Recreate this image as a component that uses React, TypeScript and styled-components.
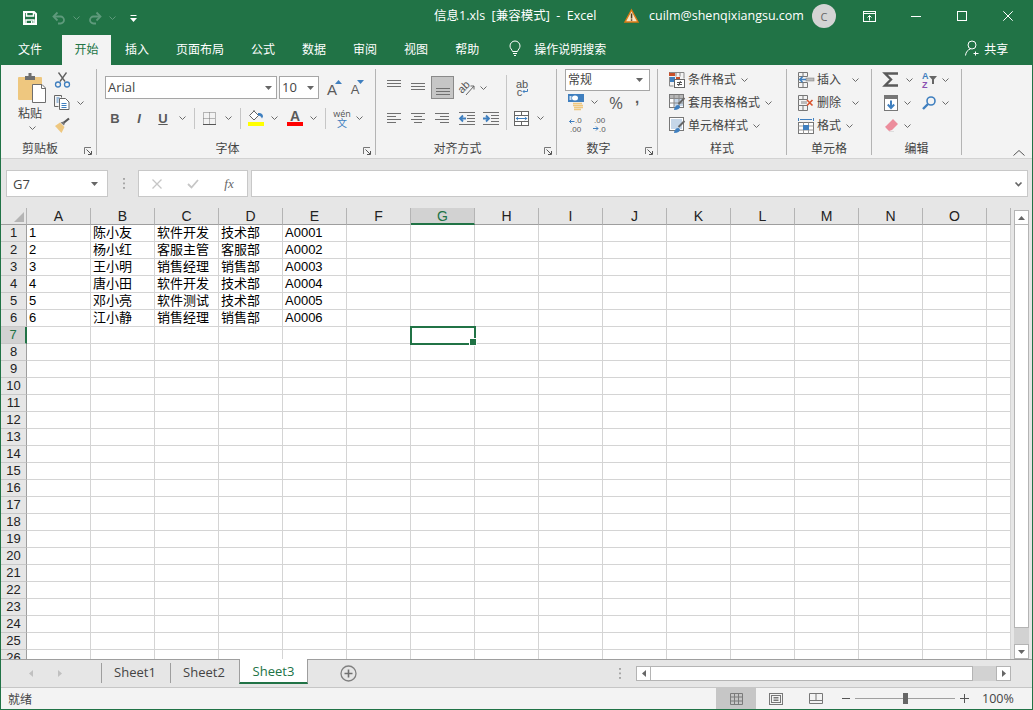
import React from "react";
import styled, { createGlobalStyle } from "styled-components";

const GREEN = "#217346";
const GRAY = "#6a6a6a";
const BLUE = "#3f7fbf";
const UI_FONT = `"Open Sans", "Noto Sans CJK SC", sans-serif`;
const CJK_FONT = `"Noto Sans CJK SC", "Open Sans", sans-serif`;
const SHEET_FONT = `"Liberation Sans", "Noto Sans CJK SC", sans-serif`;

const Global = createGlobalStyle`
  html, body { margin: 0; padding: 0; overflow: hidden; background: #fff; }
  * { box-sizing: border-box; }
  svg { display: block; flex: none; overflow: visible; }
`;

const Window = styled.div`
  width: 1033px; height: 710px; display: flex; flex-direction: column;
  border: 1px solid ${GREEN}; border-top: 0; background: #e6e6e6;
  font: 12px ${CJK_FONT}; color: #444; overflow: hidden;
`;
const TitleBar = styled.header`
  height: 35px; flex: none; background: ${GREEN}; color: #fff;
  display: flex; align-items: center; padding-bottom: 3px;
`;
const QuickAccess = styled.div`
  flex: none; display: flex; align-items: center; margin-top: 4px;
`;
const Slot = styled.span<{ $w: number; $l?: number; $h?: number }>`
  flex: none; display: flex; align-items: center; justify-content: center;
  width: ${(p) => p.$w}px; margin-left: ${(p) => p.$l ?? 0}px;
  ${(p) => (p.$h ? `height: ${p.$h}px;` : "")}
`;
const AlignSlot = styled.span<{ $l: number; $t: number }>`
  flex: none; width: 14px; height: 23px; margin-left: ${(p) => p.$l}px; padding-top: ${(p) => p.$t}px;
`;
const TitleText = styled.span<{ $l: number; $w: number }>`
  flex: none; margin-left: ${(p) => p.$l}px; width: ${(p) => p.$w}px;
  white-space: pre; font: 12.5px/16px ${UI_FONT};
`;
const Avatar = styled.span`
  flex: none; width: 24px; height: 24px; margin-left: 8px; border-radius: 50%;
  background: #d4d4d4; color: #666; display: flex; align-items: center; justify-content: center;
  font: 11px ${UI_FONT};
`;
const TabStrip = styled.nav`
  height: 30px; flex: none; background: ${GREEN}; display: flex; align-items: stretch; padding-left: 4px;
`;
const MenuTab = styled.span<{ $active?: boolean; $r?: number }>`
  flex: none; display: flex; align-items: center; justify-content: center;
  padding: 0 ${(p) => (p.$active ? 12.5 : 13)}px 4px;
  margin-right: ${(p) => p.$r ?? 1}px;
  background: ${(p) => (p.$active ? "#f3f3f3" : "transparent")};
  color: ${(p) => (p.$active ? GREEN : "#fff")};
  font: 12px ${CJK_FONT};
`;
const TabAid = styled.span<{ $l: number }>`
  flex: none; display: flex; align-items: center; margin-left: ${(p) => p.$l}px; color: #fff; font: 12px ${CJK_FONT}; padding-bottom: 4px;
`;
const Ribbon = styled.section`
  height: 94px; flex: none; background: #f3f3f3; border-bottom: 1px solid #d2d2d2;
  display: flex; align-items: flex-start; padding-top: 4px; position: relative;
`;
const Group = styled.div<{ $w: number }>`
  flex: none; width: ${(p) => p.$w}px; height: 86px; border-right: 1px solid #b4b4b4;
  display: flex; flex-direction: column;
`;
const GroupBody = styled.div<{ $row?: boolean }>`
  height: 72px; flex: none; display: flex; flex-direction: ${(p) => (p.$row ? "row" : "column")};
`;
const GroupFoot = styled.div<{ $launcher?: boolean }>`
  height: 14px; display: grid; grid-template-columns: ${(p) => (p.$launcher ? "1fr 17px" : "1fr")};
  align-items: center; text-align: center; font: 12px/14px ${CJK_FONT}; color: #444;
`;
const LauncherBox = styled.span`
  justify-self: start; margin-left: 5px; align-self: end;
`;
const ToolRow = styled.div<{ $h?: number; $top?: number }>`
  display: flex; align-items: center; height: ${(p) => p.$h ?? 23}px; margin-top: ${(p) => p.$top ?? 0}px; flex: none;
`;
const PasteColumn = styled.div`
  width: 53px; padding: 4px 0 0 17px; display: flex; flex-direction: column; flex: none;
`;
const PasteLabel = styled.span`
  font: 12px/16px ${CJK_FONT}; color: #444; width: 24px; margin-top: 2px; text-align: center;
`;
const PasteChevron = styled.span`
  margin: 5px 0 0 11px;
`;
const Stack = styled.div`
  display: flex; flex-direction: column; margin-top: -1px; flex: none;
`;
const Combo = styled.div<{ $w: number; $h?: number; $l?: number }>`
  flex: none; width: ${(p) => p.$w}px; height: ${(p) => p.$h ?? 23}px; margin-left: ${(p) => p.$l ?? 0}px;
  background: #fff; border: 1px solid #a6a6a6; display: flex; align-items: center; justify-content: space-between;
  padding: 0 4px 2px 2px; font: 13px ${UI_FONT}; color: #444;
  svg { margin-top: 2px; }
`;
const ComboCjk = styled(Combo)`
  font: 12px ${CJK_FONT}; padding-left: 2px; padding-right: 6px; padding-bottom: 3px;
`;
const BoldLetter = styled.span<{ $kind: "b" | "i" | "u" }>`
  font: ${(p) => (p.$kind === "i" ? "italic bold" : "bold")} 13px ${SHEET_FONT};
  color: #5a5a5a; ${(p) => (p.$kind === "u" ? "text-decoration: underline;" : "")}
`;
const SizeLetter = styled.span<{ $s: number }>`
  flex: none; font: ${(p) => p.$s}px/15px ${SHEET_FONT}; color: #5a5a5a; margin-top: 3px;
`;
const SizeCue = styled.span`
  flex: none; margin: -11px 0 0 -2px;
`;
const FontColorTool = styled.span`
  display: flex; flex-direction: column; align-items: center; width: 16px; font: bold 14px/12px ${SHEET_FONT}; color: #5a5a5a;
`;
const ColorBar = styled.span<{ $c: string }>`
  display: block; width: 16px; height: 4px; background: ${(p) => p.$c};
`;
const Divider = styled.span<{ $l: number; $h: number; $t?: number }>`
  flex: none; width: 1px; height: ${(p) => p.$h}px; margin-left: ${(p) => p.$l}px; margin-top: ${(p) => p.$t ?? 0}px; background: #c6c6c6;
`;
const PhoneticIcon = styled.span`
  display: flex; flex-direction: column; align-items: center; color: #555; font: 9px/9px ${UI_FONT};
`;
const PhoneticHan = styled.span`
  color: ${BLUE}; font: 10px/10px ${CJK_FONT};
`;
const WrapLetters = styled.span`
  display: flex; flex-direction: column; width: 13px; font: 11px/8px ${SHEET_FONT}; color: #555;
`;
const ColumnFlow = styled.div`
  display: flex; flex-direction: column; flex: none;
`;
const SelectedTool = styled.span<{ $l: number }>`
  flex: none; width: 23px; height: 23px; margin-left: ${(p) => p.$l}px; background: #c6c6c6; border: 1px solid #8a8a8a;
  display: flex; align-items: flex-end; justify-content: center; padding-bottom: 3px;
`;
const Percent = styled.span`
  font: 17px ${UI_FONT}; color: #5a5a5a;
`;
const Comma = styled.span`
  font: bold 15px/12px ${SHEET_FONT}; color: #5a5a5a; margin-top: -9px;
`;
const CmdText = styled.span<{ $l?: number }>`
  flex: none; margin-left: ${(p) => p.$l ?? 3}px; padding-bottom: 2px; font: 12px ${CJK_FONT}; color: #444;
`;
const Collapse = styled.span`
  margin: 81px 0 0 51px;
`;
const FormulaRow = styled.div`
  height: 49px; flex: none; padding: 11px 0 0 5px; display: flex; align-items: flex-start; background: #e6e6e6;
`;
const FieldBox = styled.div<{ $w: number; $l?: number }>`
  flex: none; width: ${(p) => p.$w}px; height: 27px; margin-left: ${(p) => p.$l ?? 0}px; background: #fff; border: 1px solid #c8c8c8;
  display: flex; align-items: center;
`;
const NameField = styled(FieldBox)`
  justify-content: space-between; padding: 0 9px 0 6px; font: 13px ${UI_FONT}; color: #444;
`;
const FxSlot = styled.span`
  flex: none; width: 36px; display: flex; justify-content: center;
  font: italic 13px "Liberation Serif", serif; color: #666;
`;
const FormulaInput = styled(FieldBox)`
  justify-content: flex-end; padding-right: 5px;
`;
const Dots = styled.span<{ $l: number; $t?: number }>`
  flex: none; width: 2px; height: 11px; margin-left: ${(p) => p.$l}px; margin-top: ${(p) => p.$t ?? 8}px;
  background-image: linear-gradient(#a6a6a6 0 2px, transparent 2px 4.5px); background-size: 2px 4.5px;
`;
const SheetArea = styled.div`
  height: 451px; flex: none; display: flex; background: #e6e6e6;
`;
const GridClip = styled.div`
  width: 1010px; flex: none; overflow: hidden; height: 451px;
`;
const SheetGrid = styled.div`
  display: grid; grid-template-columns: 26px repeat(15, 64px) 24px; grid-auto-rows: 17px;
  background: #fff; font: 13px/16px ${SHEET_FONT}; color: #000;
`;
const Corner = styled.div`
  background: #e6e6e6; border-right: 1px solid #b4b4b4; border-bottom: 1px solid #9e9e9e;
  display: flex; align-items: flex-end; justify-content: flex-end; padding: 0 2px 2px 0;
`;
const ColHead = styled.div<{ $on?: boolean }>`
  display: flex; align-items: center; justify-content: center; font: 14px/16px ${SHEET_FONT};
  background: ${(p) => (p.$on ? "#d2d2d2" : "#e6e6e6")}; color: ${(p) => (p.$on ? GREEN : "#222")};
  border-right: 1px solid #b4b4b4;
  border-bottom: ${(p) => (p.$on ? `2px solid ${GREEN}` : "1px solid #9e9e9e")};
`;
const RowHead = styled.div<{ $on?: boolean }>`
  display: flex; align-items: center; justify-content: center; font: 13px/16px ${SHEET_FONT};
  background: ${(p) => (p.$on ? "#d2d2d2" : "#e6e6e6")}; color: ${(p) => (p.$on ? GREEN : "#222")};
  border-right: ${(p) => (p.$on ? `2px solid ${GREEN}` : "1px solid #9e9e9e")};
  border-bottom: 1px solid #c8c8c8;
`;
const Cell = styled.div<{ $on?: boolean }>`
  border-right: 1px solid #d4d4d4; border-bottom: 1px solid #d4d4d4; padding: 0 0 0 2px; white-space: nowrap;
  position: relative;
  ${(p) =>
    p.$on
      ? `&::before { content: ""; position: absolute; inset: -1px -2px -2px -1px; border: 2px solid ${GREEN}; z-index: 2; }
         &::after { content: ""; position: absolute; right: -3px; bottom: -3px; width: 6px; height: 6px; background: ${GREEN}; border: 1px solid #fff; z-index: 3; }`
      : ""}
`;
const VScroll = styled.div`
  flex: none; width: 15px; margin: 2px 0 0 3px; display: flex; flex-direction: column; height: 449px;
`;
const ScrollButton = styled.div`
  flex: none; width: 15px; height: 15px; background: #fff; border: 1px solid #b4b4b4;
  display: flex; align-items: center; justify-content: center;
`;
const VThumb = styled.div`
  flex: none; height: 403px; background: #fff; border: 1px solid #b4b4b4; border-top: 0;
`;
const VTrack = styled.div`
  flex: 1; background: #d2d2d2;
`;
const SheetBar = styled.div`
  height: 29px; flex: none; display: flex; align-items: flex-start; background: #e6e6e6;
  border-top: 1px solid #9e9e9e; border-bottom: 1px solid #c6c6c6;
`;
const NavArrows = styled.div`
  width: 100px; flex: none; height: 26px; display: flex; align-items: center;
`;
const SheetTab = styled.div<{ $w: number }>`
  flex: none; width: ${(p) => p.$w}px; height: 20px; margin-top: 3px; padding: 0 2px 2px 0; display: flex; align-items: center; justify-content: center;
  border-left: 1px solid #9e9e9e; font: 13px ${UI_FONT}; color: #444;
`;
const ActiveSheetTab = styled.div<{ $w: number }>`
  flex: none; width: ${(p) => p.$w}px; height: 25px; margin-top: -1px; display: flex; align-items: center; justify-content: center;
  background: #fff; border: 1px solid #9e9e9e; border-top: 0; border-bottom: 2px solid ${GREEN}; font: 13px ${UI_FONT}; color: ${GREEN};
`;
const AddSheet = styled.span`
  flex: none; margin: 5px 0 0 32px;
`;
const HScroll = styled.div`
  flex: none; margin: 6px 0 0 15px; width: 375px; height: 15px; display: flex; background: #d2d2d2;
`;
const HThumb = styled.div`
  flex: none; width: 322px; background: #fff; border: 1px solid #b4b4b4; border-left: 0;
`;
const HSpacer = styled.div`
  flex: 1;
`;
const StatusBar = styled.footer`
  height: 21px; flex: none; background: #f3f3f3; display: flex; align-items: center;
`;
const StatusText = styled.span`
  flex: none; width: 715px; padding-left: 7px; font: 12px ${CJK_FONT}; color: #444;
`;
const ViewButton = styled.span<{ $on?: boolean }>`
  flex: none; width: 40px; height: 21px; display: flex; align-items: center; justify-content: center;
  background: ${(p) => (p.$on ? "#c6c6c6" : "transparent")};
`;
const SliderTrack = styled.span`
  flex: none; width: 100px; height: 1px; margin-left: 5px; background: #a0a0a0; display: flex; align-items: center; justify-content: center;
`;
const SliderThumb = styled.span`
  flex: none; width: 5px; height: 11px; background: #666; margin-left: 1px;
`;
const Zoom = styled.span`
  flex: none; margin-left: 13px; font: 12.5px ${UI_FONT}; color: #444;
`;

const Svg = ({ w, h, children }: { w: number; h: number; children: React.ReactNode }) => (
  <svg width={w} height={h} viewBox={`0 0 ${w} ${h}`} fill="none">{children}</svg>
);
const Chev = ({ c = GRAY, sw = 1 }: { c?: string; sw?: number }) => (
  <Svg w={7} h={4}><path d="M.5.5l3 3 3-3" stroke={c} strokeWidth={sw} /></Svg>
);
const Caret = () => (
  <Svg w={7} h={4}><path d="M0 0h7L3.5 4z" fill="#666" /></Svg>
);
const Launcher = () => (
  <LauncherBox>
    <Svg w={8} h={8}>
      <path d="M.5 7V.5H7" stroke="#777" />
      <path d="M2.5 2.5L7 7M7.5 4v3.5H4" stroke="#555" />
    </Svg>
  </LauncherBox>
);
const SaveIcon = () => (
  <Svg w={14} h={14}>
    <path d="M1 1h10l2 2v10H1z" stroke="#fff" strokeWidth="2" />
    <path d="M3.5 1v4h7V1" stroke="#fff" strokeWidth="1.5" />
    <path d="M3 13V9h8v4" stroke="#fff" strokeWidth="1.5" />
    <rect x="8" y="10" width="1.5" height="3" fill="#fff" />
  </Svg>
);
const UndoIcon = ({ flip }: { flip?: boolean }) => (
  <svg width={14} height={14} viewBox="0 0 14 14" fill="none" style={flip ? { transform: "scaleX(-1)" } : undefined}>
    <path d="M2 5.5h6.5a3.5 3.5 0 010 7H6" stroke="#5f9a7c" strokeWidth="1.8" />
    <path d="M5.5 1.5L1.5 5.5l4 4" stroke="#5f9a7c" strokeWidth="1.8" />
  </svg>
);
const QatMenu = () => (
  <Svg w={7} h={7}>
    <rect width="6" height="1" x=".5" fill="#fff" />
    <path d="M0 3h7L3.500 7z" fill="#fff" />
  </Svg>
);
const WarnIcon = () => (
  <Svg w={15} h={14}>
    <path d="M7.500 1L14 13H1z" fill="#f8e5c5" stroke="#dc7a14" strokeWidth="1.400" />
    <rect x="6.800" y="4.500" width="1.500" height="5" fill="#4a3a20" />
    <rect x="6.800" y="10.300" width="1.500" height="1.500" fill="#4a3a20" />
  </Svg>
);
const DisplayIcon = () => (
  <Svg w={13} h={11}>
    <rect x=".5" y=".5" width="12" height="10" stroke="#fff" />
    <path d="M.5 2.500h12" stroke="#fff" />
    <path d="M6.500 9.500V4.500M4.500 6.500l2-2 2 2" stroke="#fff" />
  </Svg>
);
const MinIcon = () => <Svg w={10} h={1}><rect width="10" height="1" fill="#fff" /></Svg>;
const MaxIcon = () => <Svg w={10} h={10}><rect x=".5" y=".5" width="9" height="9" stroke="#fff" /></Svg>;
const CloseIcon = () => <Svg w={10} h={10}><path d="M.3.3l9.400 9.400M9.700.3L.3 9.700" stroke="#fff" /></Svg>;
const BulbIcon = () => (
  <Svg w={12} h={17}>
    <path d="M3.500 11.500C3 9.500 1 8.500 1 6a5 5 0 0110 0c0 2.500-2 3.500-2.500 5.500z" stroke="#fff" />
    <path d="M4 13.500h4M5 15.500h2" stroke="#fff" />
  </Svg>
);
const ShareIcon = () => (
  <Svg w={15} h={16}>
    <circle cx="7" cy="5" r="4" stroke="#fff" />
    <path d="M.5 15.500c.3-3.500 2.500-6 5-6.500M10.500 11.500v4M8.500 13.500h5" stroke="#fff" />
  </Svg>
);
const PasteIcon = () => (
  <Svg w={29} h={30}>
    <rect y="4" width="24" height="23" rx="1" fill="#eec77f" />
    <path d="M7 7V3h3.500V0h3v3H17v4z" fill="#6e6e6e" />
    <path d="M14.500 11.500H24l3.500 3.500v14.500h-13z" fill="#fff" stroke="#6e6e6e" />
    <path d="M23.500 11.500v4h4" stroke="#6e6e6e" />
  </Svg>
);
const ScissorsIcon = () => (
  <Svg w={15} h={16}>
    <path d="M3.500 0.500L10 9.500M11.500 0.500L5 9.500" stroke="#5f5f5f" strokeWidth="1.300" />
    <circle cx="3" cy="12.500" r="2.500" stroke={BLUE} strokeWidth="1.300" />
    <circle cx="12" cy="12.500" r="2.500" stroke={BLUE} strokeWidth="1.300" />
  </Svg>
);
const CopyIcon = () => (
  <Svg w={16} h={15}>
    <path d="M.5.5h7l0 2M.5.5v11h4" stroke="#666" />
    <path d="M5.500 3.500h6l3.500 3.500v7.500h-9.500z" fill="#fff" stroke="#666" />
    <path d="M7.500 8.500h5M7.500 10.500h5M7.500 12.500h5M2.500 3h3M2.500 5h2M2.500 7h2" stroke={BLUE} />
  </Svg>
);
const BrushIcon = () => (
  <Svg w={16} h={15}>
    <path d="M1 8l5-3.500 4.500 4.500L7.500 15z" fill="#eec77f" />
    <path d="M6.500 4.500l3-1 1.500 1.500-1 2.500z" fill="#777" />
    <path d="M10 4.500L15 .5" stroke="#555" strokeWidth="2.200" />
  </Svg>
);
const CueUp = () => <Svg w={7} h={4}><path d="M0 4L3.500 0 7 4z" fill={BLUE} /></Svg>;
const CueDown = () => <Svg w={7} h={4}><path d="M0 0h7L3.500 4z" fill={BLUE} /></Svg>;
const BorderIcon = () => (
  <Svg w={13} h={13}>
    <path d="M.5.5h12v12H.5zM6.500.5v12M.5 6.500h12" stroke="#777" strokeDasharray="1 1" />
    <path d="M0 12.500h13" stroke="#555" />
  </Svg>
);
const FillIcon = () => (
  <Svg w={16} h={12}>
    <path d="M6 1L1.500 5.500 6 10l4.500-4.500z" fill="#fff" stroke="#666" />
    <path d="M6 1V0" stroke="#666" />
    <path d="M10 3c3-.5 5 1 5 3.500l-1 2c-1-2-2-3-4-3z" fill={BLUE} />
  </Svg>
);
const Lines = ({ ys, inset = [] }: { ys: number[]; inset?: [number, number][] }) => {
  const h = Math.max(...ys) + 1;
  return (
    <Svg w={14} h={h}>
      {ys.map((y, i) => {
        const [a, b] = inset[i] ?? [0, 14];
        return <rect key={y} x={a} y={y} width={b - a} height="1" fill="#707070" />;
      })}
    </Svg>
  );
};
const OrientIcon = () => (
  <Svg w={16} h={16}>
    <text x="0" y="11" fontFamily="Liberation Sans" fontSize="11" fill="#555" transform="rotate(-45 5 9)">ab</text>
    <path d="M7 15L15 6M11.500 6H15v3.500" stroke="#666" />
  </Svg>
);
const ReturnArrow = () => (
  <Svg w={6} h={5}><path d="M5.500 0v2.500H1M2.500 1L1 2.500 2.500 4" stroke={BLUE} /></Svg>
);
const IndentIcon = ({ right }: { right?: boolean }) => (
  <Svg w={16} h={13}>
    <path d="M0 .5h16M8 3.500h8M8 6.500h8M8 9.500h8M0 12.500h16" stroke="#707070" />
    {right ? (
      <path d="M0 6.500h5M3 3.500l3 3-3 3" stroke={BLUE} strokeWidth="1.800" />
    ) : (
      <path d="M7 6.500H2M4 3.500l-3 3 3 3" stroke={BLUE} strokeWidth="1.800" />
    )}
  </Svg>
);
const MergeIcon = () => (
  <Svg w={15} h={15}>
    <rect x=".5" y=".5" width="14" height="14" fill="#fff" stroke="#666" />
    <path d="M.5 4.500h14M.5 10.500h14M7.500.5v4M7.500 10.500v4" stroke="#666" />
    <path d="M2 7.500h11M4 5.800L2.300 7.500 4 9.200M11 5.800l1.700 1.700L11 9.200" stroke={BLUE} />
  </Svg>
);
const CurrencyIcon = () => (
  <Svg w={16} h={17}>
    <rect width="16" height="8" fill={BLUE} />
    <ellipse cx="7" cy="4" rx="3" ry="2.500" fill="#fff" />
    <rect x="1.500" y="2" width="2" height="4" fill="#cfe0f0" />
    <path d="M5 9.500h9M5 11.500h10M6 13.500h9M6 15.500h7" stroke="#eec77f" strokeWidth="1.500" />
  </Svg>
);
const DecimalIcon = ({ more }: { more?: boolean }) => (
  <Svg w={15} h={15}>
    <text x={more ? 2 : 7} y="6" fontFamily="Liberation Sans" fontSize="8" fill="#5a5a5a">{more ? ".00" : ".0"}</text>
    <text x={more ? 7 : 2} y="15" fontFamily="Liberation Sans" fontSize="8" fill="#5a5a5a">{more ? ".0" : ".00"}</text>
    {more ? (
      <path d="M1 11.500h5M4 9.500l2 2-2 2" stroke={BLUE} />
    ) : (
      <path d="M1.500 4.500h5M3.500 2.500l-2 2 2 2" stroke={BLUE} />
    )}
  </Svg>
);
const CondIcon = () => (
  <Svg w={16} h={16}>
    <rect x="0" width="6" height="4" fill="#c94f2a" />
    <rect x="0" y="5" width="6" height="5" fill={BLUE} />
    <rect x="7" y="5" width="4" height="4" fill="#c94f2a" />
    <path d="M.5.500h14.500v6M7 .5v4M11 .5v4M.5 5v9h4" stroke="#888" />
    <rect x="5.500" y="7.500" width="10" height="8" fill="#fff" stroke="#666" />
    <path d="M8 10.500h5M8 12.500h5M11.500 9l-2 5" stroke="#555" />
  </Svg>
);
const TableFmtIcon = () => (
  <Svg w={16} h={17}>
    <rect x=".5" y=".5" width="14" height="13" fill="#fff" stroke="#777" />
    <rect x="1" y="1" width="13" height="3" fill="#b7b7b7" />
    <rect x="5" y="4" width="9" height="8" fill="#c5d6e8" />
    <path d="M5 .5v13M10 .5v13M.5 4.500h14M.5 9h14" stroke="#888" />
    <path d="M15.500 4L9.500 10" stroke="#666" strokeWidth="2" />
    <path d="M5 16c0-3 2-5 4.500-5l1.500 1.500c0 2-2 3.500-6 3.500z" fill={BLUE} />
  </Svg>
);
const CellFmtIcon = () => (
  <Svg w={16} h={17}>
    <rect x=".5" y=".5" width="14" height="13" fill="#fff" stroke="#777" />
    <rect x="2" y="2" width="11" height="10" fill="#c5d6e8" />
    <path d="M15.500 4L9.500 10" stroke="#666" strokeWidth="2" />
    <path d="M5 16c0-3 2-5 4.500-5l1.500 1.500c0 2-2 3.500-6 3.500z" fill={BLUE} />
  </Svg>
);
const InsertIcon = () => (
  <Svg w={16} h={16}>
    <path d="M.5.500h9v4h-9zM5 .5v4M.5 10.500h9v5h-9zM5 10.500v5M.5 4.500v6" stroke="#777" />
    <rect x="8" y="6" width="8" height="3" fill="#bbb" stroke="#777" strokeWidth=".5" />
    <path d="M8 7.500H2M4.500 4.800L1.800 7.500l2.700 2.700" stroke={BLUE} strokeWidth="1.600" />
  </Svg>
);
const DeleteIcon = () => (
  <Svg w={16} h={16}>
    <path d="M.5.500h9v4h-9zM5 .5v4M.5 10.500h9v5h-9zM5 10.500v5M.5 4.500v6" stroke="#777" />
    <rect x="3" y="6" width="6" height="3" fill="#bbb" />
    <path d="M9 5l5.500 5.500M14.500 5L9 10.500" stroke="#d9532c" strokeWidth="1.600" />
  </Svg>
);
const FormatIcon = () => (
  <Svg w={16} h={16}>
    <path d="M.5 0v3M15.500 0v3M2 1.500h12" stroke={BLUE} />
    <rect x=".5" y="4.500" width="15" height="11" fill="#fff" stroke="#777" />
    <path d="M.5 8h15M.5 12h15M5.500 4.500v11M10.500 4.500v11" stroke="#999" />
    <rect x="5" y="7" width="6" height="5" fill={BLUE} />
  </Svg>
);
const SigmaIcon = () => (
  <Svg w={15} h={15}>
    <path d="M15 1.500H2L8 7.500 2 13.500h13" stroke="#5a5a5a" strokeWidth="2.400" />
  </Svg>
);
const SortIcon = () => (
  <Svg w={15} h={17}>
    <text x="0" y="8" fontFamily="Liberation Sans" fontWeight="bold" fontSize="9" fill={BLUE}>A</text>
    <text x="0" y="17" fontFamily="Liberation Sans" fontWeight="bold" fontSize="9" fill="#8a4fb0">Z</text>
    <path d="M7 5h8l-3 3.500V13h-2V8.500z" fill="#666" />
  </Svg>
);
const FillDownIcon = () => (
  <Svg w={14} h={16}>
    <rect x=".5" y=".5" width="13" height="15" fill="#fff" stroke="#777" />
    <rect width="14" height="4" fill="#777" />
    <path d="M7 5.500V13M3.800 9.500L7 13l3.200-3.500" stroke={BLUE} strokeWidth="2" />
  </Svg>
);
const FindIcon = () => (
  <Svg w={14} h={14}>
    <circle cx="9" cy="5" r="4" stroke={BLUE} strokeWidth="1.600" />
    <path d="M6 8l-5 5" stroke={BLUE} strokeWidth="2.400" />
  </Svg>
);
const EraserIcon = () => (
  <Svg w={13} h={13}>
    <path d="M8 0l5 5-6 6-3 1L1 9c-1-1-1-2 0-2z" fill="#ec8d9c" />
    <path d="M4 12.500h5" stroke="#ddd" />
  </Svg>
);
const CollapseIcon = () => <Svg w={12} h={6}><path d="M.5 5.500l5.500-5 5.500 5" stroke="#555" /></Svg>;
const CloseGlyph = () => <Svg w={10} h={10}><path d="M.5.5l9 9M9.500.5l-9 9" stroke="#c6c6c6" strokeWidth="1.300" /></Svg>;
const CheckGlyph = () => <Svg w={12} h={10}><path d="M1 5l3.500 3.500L11 1" stroke="#c6c6c6" strokeWidth="1.800" /></Svg>;
const Tri = ({ dir, c = "#666" }: { dir: "u" | "d" | "l" | "r"; c?: string }) => {
  const d = { u: "M0 4L3.500 0 7 4z", d: "M0 0h7L3.500 4z", l: "M5 0v7L1 3.500z", r: "M1 0v7l4-3.500z" }[dir];
  const vertical = dir === "u" || dir === "d";
  return <svg width={vertical ? 7 : 6} height={vertical ? 4 : 7} viewBox={vertical ? "0 0 7 4" : "0 0 6 7"}><path d={d} fill={c} /></svg>;
};
const PlusCircle = () => (
  <Svg w={17} h={17}>
    <circle cx="8.500" cy="8.500" r="7.500" stroke="#808080" strokeWidth="1.300" />
    <path d="M8.500 4.500v8M4.500 8.500h8" stroke="#707070" strokeWidth="1.600" />
  </Svg>
);
const NormalViewIcon = () => (
  <Svg w={13} h={12}><path d="M.5.500h12v11H.5zM.5 4h12M.5 8h12M4.500.5v11M8.500.5v11" stroke="#7a7a7a" /></Svg>
);
const PageViewIcon = () => (
  <Svg w={14} h={12}>
    <rect x=".5" y=".5" width="13" height="11" stroke="#777" />
    <rect x="2.500" y="2.500" width="9" height="7" stroke="#777" />
    <path d="M4.500 4.500h5M4.500 6h5M4.500 7.500h5" stroke="#777" />
  </Svg>
);
const BreakViewIcon = () => (
  <Svg w={14} h={12}><path d="M.5.500h13v10H.5zM.5 7.500h13M7 .5v7" stroke="#777" /></Svg>
);
const StatusMinus = () => <Svg w={8} h={1}><rect width="8" height="1" fill="#555" /></Svg>;
const StatusPlus = () => <Svg w={9} h={9}><path d="M0 4.500h9M4.500 0v9" stroke="#555" /></Svg>;
const CornerTri = () => <Svg w={10} h={10}><path d="M10 0v10H0z" fill="#b4b4b4" /></Svg>;

const COLS = "ABCDEFGHIJKLMNO".split("").concat("");
const DATA: string[][] = [
  ["1", "陈小友", "软件开发", "技术部", "A0001"],
  ["2", "杨小红", "客服主管", "客服部", "A0002"],
  ["3", "王小明", "销售经理", "销售部", "A0003"],
  ["4", "唐小田", "软件开发", "技术部", "A0004"],
  ["5", "邓小亮", "软件测试", "技术部", "A0005"],
  ["6", "江小静", "销售经理", "销售部", "A0006"],
];
const ROWS = Array.from({ length: 26 }, (_, i) => i + 1);

export default function App() {
  return (
    <Window>
      <Global />
      <TitleBar>
        <QuickAccess>
          <Slot $w={14} $l={22}><SaveIcon /></Slot>
          <Slot $w={14} $l={15}><UndoIcon /></Slot>
          <Slot $w={7} $l={7}><Chev c="#5f9a7c" /></Slot>
          <Slot $w={14} $l={8}><UndoIcon flip /></Slot>
          <Slot $w={7} $l={7}><Chev c="#5f9a7c" /></Slot>
          <Slot $w={7} $l={14}><QatMenu /></Slot>
        </QuickAccess>
        <TitleText $l={297} $w={190}>信息1.xls  [兼容模式]  -  Excel</TitleText>
        <Slot $w={15}><WarnIcon /></Slot>
        <TitleText $l={10} $w={155}>cuilm@shenqixiangsu.com</TitleText>
        <Avatar>C</Avatar>
        <Slot $w={13} $l={27}><DisplayIcon /></Slot>
        <Slot $w={10} $l={35}><MinIcon /></Slot>
        <Slot $w={10} $l={36}><MaxIcon /></Slot>
        <Slot $w={10} $l={36}><CloseIcon /></Slot>
      </TitleBar>
      <TabStrip>
        <MenuTab $r={7}>文件</MenuTab>
        <MenuTab $active>开始</MenuTab>
        <MenuTab>插入</MenuTab>
        <MenuTab>页面布局</MenuTab>
        <MenuTab>公式</MenuTab>
        <MenuTab>数据</MenuTab>
        <MenuTab>审阅</MenuTab>
        <MenuTab>视图</MenuTab>
        <MenuTab>帮助</MenuTab>
        <TabAid $l={16}><BulbIcon /></TabAid>
        <TabAid $l={13}>操作说明搜索</TabAid>
        <TabAid $l={359}><ShareIcon /></TabAid>
        <TabAid $l={4}>共享</TabAid>
      </TabStrip>
      <Ribbon>
        <Group $w={96}>
          <GroupBody $row>
            <PasteColumn>
              <PasteIcon />
              <PasteLabel>粘贴</PasteLabel>
              <PasteChevron><Chev /></PasteChevron>
            </PasteColumn>
            <Stack>
              <ToolRow><Slot $w={15} $l={1}><ScissorsIcon /></Slot></ToolRow>
              <ToolRow>
                <Slot $w={16}><CopyIcon /></Slot>
                <Slot $w={7} $l={7}><Chev /></Slot>
              </ToolRow>
              <ToolRow><Slot $w={16}><BrushIcon /></Slot></ToolRow>
            </Stack>
          </GroupBody>
          <GroupFoot $launcher>剪贴板<Launcher /></GroupFoot>
        </Group>
        <Group $w={279}>
          <GroupBody>
            <ToolRow $top={7}>
              <Combo $w={172} $l={8}>Arial<Caret /></Combo>
              <Combo $w={40} $l={2}>10<Caret /></Combo>
              <Slot $w={15} $l={8}><SizeLetter $s={15}>A</SizeLetter><SizeCue><CueUp /></SizeCue></Slot>
              <Slot $w={13} $l={9}><SizeLetter $s={13}>A</SizeLetter><SizeCue><CueDown /></SizeCue></Slot>
            </ToolRow>
            <ToolRow $h={22} $top={8}>
              <Slot $w={10} $l={13}><BoldLetter $kind="b">B</BoldLetter></Slot>
              <Slot $w={10} $l={14}><BoldLetter $kind="i">I</BoldLetter></Slot>
              <Slot $w={10} $l={14}><BoldLetter $kind="u">U</BoldLetter></Slot>
              <Slot $w={7} $l={11}><Chev /></Slot>
              <Divider $l={8} $h={21} />
              <Slot $w={13} $l={8}><BorderIcon /></Slot>
              <Slot $w={7} $l={9}><Chev /></Slot>
              <Divider $l={8} $h={21} />
              <Slot $w={16} $l={7}>
                <FontColorTool><FillIcon /><ColorBar $c="#ffff00" /></FontColorTool>
              </Slot>
              <Slot $w={7} $l={7}><Chev /></Slot>
              <Slot $w={16} $l={9}>
                <FontColorTool>A<ColorBar $c="#ff0000" /></FontColorTool>
              </Slot>
              <Slot $w={7} $l={7}><Chev /></Slot>
              <Divider $l={8} $h={21} />
              <Slot $w={16} $l={8}>
                <PhoneticIcon>wén<PhoneticHan>文</PhoneticHan></PhoneticIcon>
              </Slot>
              <Slot $w={7} $l={6}><Chev /></Slot>
            </ToolRow>
          </GroupBody>
          <GroupFoot $launcher>字体<Launcher /></GroupFoot>
        </Group>
        <Group $w={181}>
          <GroupBody $row>
            <ColumnFlow>
              <ToolRow $top={7}>
                <AlignSlot $l={11} $t={4}><Lines ys={[0, 3, 6]} /></AlignSlot>
                <AlignSlot $l={10} $t={7}><Lines ys={[0, 3, 6]} /></AlignSlot>
                <SelectedTool $l={6}><Lines ys={[0, 3, 6]} /></SelectedTool>
                <Slot $w={16} $l={5}><OrientIcon /></Slot>
                <Slot $w={7} $l={5}><Chev /></Slot>
              </ToolRow>
              <ToolRow $h={22} $top={8}>
                <Slot $w={14} $l={11}><Lines ys={[0, 3, 6, 9]} inset={[[0, 14], [0, 9], [0, 14], [0, 9]]} /></Slot>
                <Slot $w={14} $l={10}><Lines ys={[0, 3, 6, 9]} inset={[[0, 14], [3, 11], [0, 14], [3, 11]]} /></Slot>
                <Slot $w={14} $l={10}><Lines ys={[0, 3, 6, 9]} inset={[[0, 14], [5, 14], [0, 14], [5, 14]]} /></Slot>
                <Slot $w={16} $l={10}><IndentIcon /></Slot>
                <Slot $w={16} $l={8}><IndentIcon right /></Slot>
              </ToolRow>
            </ColumnFlow>
            <Divider $l={7} $h={55} $t={6} />
            <ColumnFlow>
              <ToolRow $top={7}>
                <Slot $w={13} $l={9}>
                  <WrapLetters>ab<Slot $w={13}>c<ReturnArrow /></Slot></WrapLetters>
                </Slot>
              </ToolRow>
              <ToolRow $h={22} $top={8}>
                <Slot $w={15} $l={7}><MergeIcon /></Slot>
                <Slot $w={7} $l={8}><Chev /></Slot>
              </ToolRow>
            </ColumnFlow>
          </GroupBody>
          <GroupFoot $launcher>对齐方式<Launcher /></GroupFoot>
        </Group>
        <Group $w={101}>
          <GroupBody>
            <ToolRow $h={22}><ComboCjk $w={85} $h={22} $l={8}>常规<Caret /></ComboCjk></ToolRow>
            <ToolRow $h={22}>
              <Slot $w={16} $l={11}><CurrencyIcon /></Slot>
              <Slot $w={7} $l={7}><Chev /></Slot>
              <Slot $w={14} $l={11}><Percent>%</Percent></Slot>
              <Slot $w={6} $l={11}><Comma>,</Comma></Slot>
            </ToolRow>
            <ToolRow $h={22}>
              <Slot $w={15} $l={11}><DecimalIcon /></Slot>
              <Slot $w={15} $l={9}><DecimalIcon more /></Slot>
            </ToolRow>
          </GroupBody>
          <GroupFoot $launcher>数字<Launcher /></GroupFoot>
        </Group>
        <Group $w={129}>
          <GroupBody>
            <Stack>
              <ToolRow><Slot $w={16} $l={11}><CondIcon /></Slot><CmdText>条件格式</CmdText><Slot $w={7} $l={5}><Chev /></Slot></ToolRow>
              <ToolRow><Slot $w={16} $l={11}><TableFmtIcon /></Slot><CmdText>套用表格格式</CmdText><Slot $w={7} $l={5}><Chev /></Slot></ToolRow>
              <ToolRow><Slot $w={16} $l={11}><CellFmtIcon /></Slot><CmdText>单元格样式</CmdText><Slot $w={7} $l={5}><Chev /></Slot></ToolRow>
            </Stack>
          </GroupBody>
          <GroupFoot>样式</GroupFoot>
        </Group>
        <Group $w={85}>
          <GroupBody>
            <Stack>
              <ToolRow><Slot $w={16} $l={11}><InsertIcon /></Slot><CmdText>插入</CmdText><Slot $w={7} $l={11}><Chev /></Slot></ToolRow>
              <ToolRow><Slot $w={16} $l={11}><DeleteIcon /></Slot><CmdText>删除</CmdText><Slot $w={7} $l={11}><Chev /></Slot></ToolRow>
              <ToolRow><Slot $w={16} $l={11}><FormatIcon /></Slot><CmdText>格式</CmdText><Slot $w={7} $l={5}><Chev /></Slot></ToolRow>
            </Stack>
          </GroupBody>
          <GroupFoot>单元格</GroupFoot>
        </Group>
        <Group $w={90}>
          <GroupBody>
            <Stack>
              <ToolRow>
                <Slot $w={15} $l={11}><SigmaIcon /></Slot>
                <Slot $w={7} $l={8}><Chev /></Slot>
                <Slot $w={15} $l={9}><SortIcon /></Slot>
                <Slot $w={7} $l={5}><Chev /></Slot>
              </ToolRow>
              <ToolRow>
                <Slot $w={14} $l={12}><FillDownIcon /></Slot>
                <Slot $w={7} $l={6}><Chev /></Slot>
                <Slot $w={14} $l={11}><FindIcon /></Slot>
                <Slot $w={7} $l={6}><Chev /></Slot>
              </ToolRow>
              <ToolRow>
                <Slot $w={13} $l={13}><EraserIcon /></Slot>
                <Slot $w={7} $l={6}><Chev /></Slot>
              </ToolRow>
            </Stack>
          </GroupBody>
          <GroupFoot>编辑</GroupFoot>
        </Group>
        <Collapse><CollapseIcon /></Collapse>
      </Ribbon>
      <FormulaRow>
        <NameField $w={102}>G7<Caret /></NameField>
        <Dots $l={15} />
        <FieldBox $w={110} $l={13}>
          <FxSlot><CloseGlyph /></FxSlot>
          <FxSlot><CheckGlyph /></FxSlot>
          <FxSlot>fx</FxSlot>
        </FieldBox>
        <FormulaInput $w={777} $l={3}><Chev c="#666" sw={1.6} /></FormulaInput>
      </FormulaRow>
      <SheetArea>
        <GridClip>
          <SheetGrid>
            <Corner><CornerTri /></Corner>
            {COLS.map((c, i) => <ColHead key={i} $on={c === "G"}>{c}</ColHead>)}
            {ROWS.map((r) => (
              <React.Fragment key={r}>
                <RowHead $on={r === 7}>{r}</RowHead>
                {COLS.map((c, i) => (
                  <Cell key={i} $on={r === 7 && c === "G"}>{DATA[r - 1]?.[i] ?? ""}</Cell>
                ))}
              </React.Fragment>
            ))}
          </SheetGrid>
        </GridClip>
        <VScroll>
          <ScrollButton><Tri dir="u" /></ScrollButton>
          <VThumb />
          <VTrack />
          <ScrollButton><Tri dir="d" /></ScrollButton>
        </VScroll>
      </SheetArea>
      <SheetBar>
        <NavArrows>
          <Slot $w={6} $l={27}><Tri dir="l" c="#c0c0c0" /></Slot>
          <Slot $w={6} $l={23}><Tri dir="r" c="#c0c0c0" /></Slot>
        </NavArrows>
        <SheetTab $w={69}>Sheet1</SheetTab>
        <SheetTab $w={69}>Sheet2</SheetTab>
        <ActiveSheetTab $w={69}>Sheet3</ActiveSheetTab>
        <AddSheet><PlusCircle /></AddSheet>
        <Dots $l={262} $t={8} />
        <HScroll>
          <ScrollButton><Tri dir="l" /></ScrollButton>
          <HThumb />
          <HSpacer />
          <ScrollButton><Tri dir="r" /></ScrollButton>
        </HScroll>
      </SheetBar>
      <StatusBar>
        <StatusText>就绪</StatusText>
        <ViewButton $on><NormalViewIcon /></ViewButton>
        <ViewButton><PageViewIcon /></ViewButton>
        <ViewButton><BreakViewIcon /></ViewButton>
        <Slot $w={8} $l={6}><StatusMinus /></Slot>
        <SliderTrack><SliderThumb /></SliderTrack>
        <Slot $w={9} $l={5}><StatusPlus /></Slot>
        <Zoom>100%</Zoom>
      </StatusBar>
    </Window>
  );
}
